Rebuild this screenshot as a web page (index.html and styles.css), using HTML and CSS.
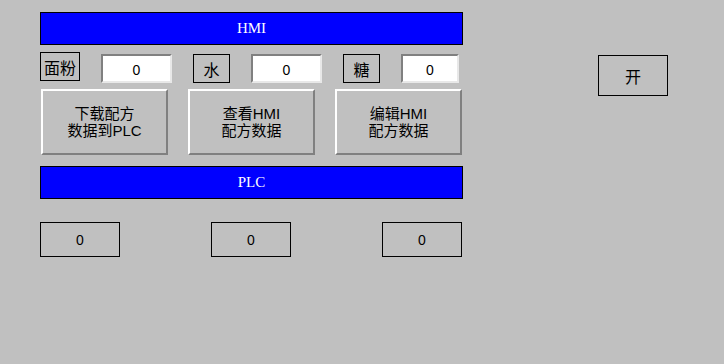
FILE: index.html
```html
<!DOCTYPE html>
<html lang="zh">
<head>
<meta charset="utf-8">
<title>HMI</title>
<link rel="stylesheet" href="styles.css">
</head>
<body>
<div class="screen">
  <div class="panel">
    <div class="bar">HMI</div>
    <div class="inputs">
      <div class="label label-wide">面粉</div>
      <div class="field field-wide">0</div>
      <div class="label label-down">水</div>
      <div class="field field-wide">0</div>
      <div class="label label-down">糖</div>
      <div class="field field-narrow">0</div>
    </div>
    <div class="buttons">
      <div class="btn">下载配方<br>数据到PLC</div>
      <div class="btn">查看HMI<br>配方数据</div>
      <div class="btn">编辑HMI<br>配方数据</div>
    </div>
    <div class="bar bar-plc">PLC</div>
    <div class="outputs">
      <div class="out">0</div>
      <div class="out">0</div>
      <div class="out">0</div>
    </div>
  </div>
  <div class="switch">开</div>
</div>
</body>
</html>
```
FILE: styles.css
```css
* { box-sizing: border-box; }
html, body {
  margin: 0;
  padding: 0;
  background: #c0c0c0;
  width: 724px;
  height: 364px;
  overflow: hidden;
  font-family: "Noto Sans CJK SC", "DejaVu Sans", sans-serif;
  color: #000;
}
.screen {
  display: flex;
  align-items: flex-start;
  padding: 12px 0 0 40px;
}
.panel {
  width: 423px;
  display: flex;
  flex-direction: column;
}
.bar {
  height: 33px;
  background: #0000ff;
  border: 1px solid #000;
  color: #fff;
  font-family: "Liberation Serif", "Noto Sans CJK SC", serif;
  font-size: 15px;
  display: flex;
  align-items: center;
  justify-content: center;
  line-height: 1;
}
.inputs {
  display: flex;
  align-items: flex-start;
  gap: 21px;
  margin-top: 7px;
}
.label {
  height: 29px;
  border: 1px solid #000;
  display: flex;
  align-items: center;
  justify-content: center;
  font-size: 16px;
  line-height: 1;
}
.label-wide { width: 40px; }
.label-down { width: 37px; margin-top: 2px; }
.field {
  height: 29px;
  margin-top: 2px;
  background: #fff;
  border-top: 2px solid #808080;
  border-left: 2px solid #808080;
  border-bottom: 2px solid #e8e8e8;
  border-right: 2px solid #e8e8e8;
  display: flex;
  align-items: center;
  justify-content: center;
  font-family: "Liberation Sans", sans-serif;
  font-size: 14px;
  line-height: 1;
  padding-top: 3px;
}
.field-wide { width: 71px; }
.field-narrow { width: 58px; }
.buttons {
  display: flex;
  gap: 20px;
  margin: 6px 0 0 1px;
}
.btn {
  width: 127px;
  height: 66px;
  border-top: 2px solid #fff;
  border-left: 2px solid #fff;
  border-bottom: 2px solid #808080;
  border-right: 2px solid #808080;
  display: flex;
  align-items: center;
  justify-content: center;
  text-align: center;
  font-family: "Liberation Sans", "Noto Sans CJK SC", sans-serif;
  font-size: 15px;
  line-height: 17px;
}
.bar-plc { margin-top: 11px; }
.outputs {
  display: flex;
  justify-content: space-between;
  margin-top: 23px;
  padding-right: 1px;
}
.out {
  width: 80px;
  height: 35px;
  border: 1px solid #000;
  display: flex;
  align-items: center;
  justify-content: center;
  font-family: "Liberation Sans", sans-serif;
  font-size: 14px;
  line-height: 1;
}
.switch {
  width: 70px;
  height: 41px;
  margin: 43px 0 0 135px;
  border: 1px solid #000;
  display: flex;
  align-items: center;
  justify-content: center;
  font-size: 16px;
  line-height: 1;
}
```
